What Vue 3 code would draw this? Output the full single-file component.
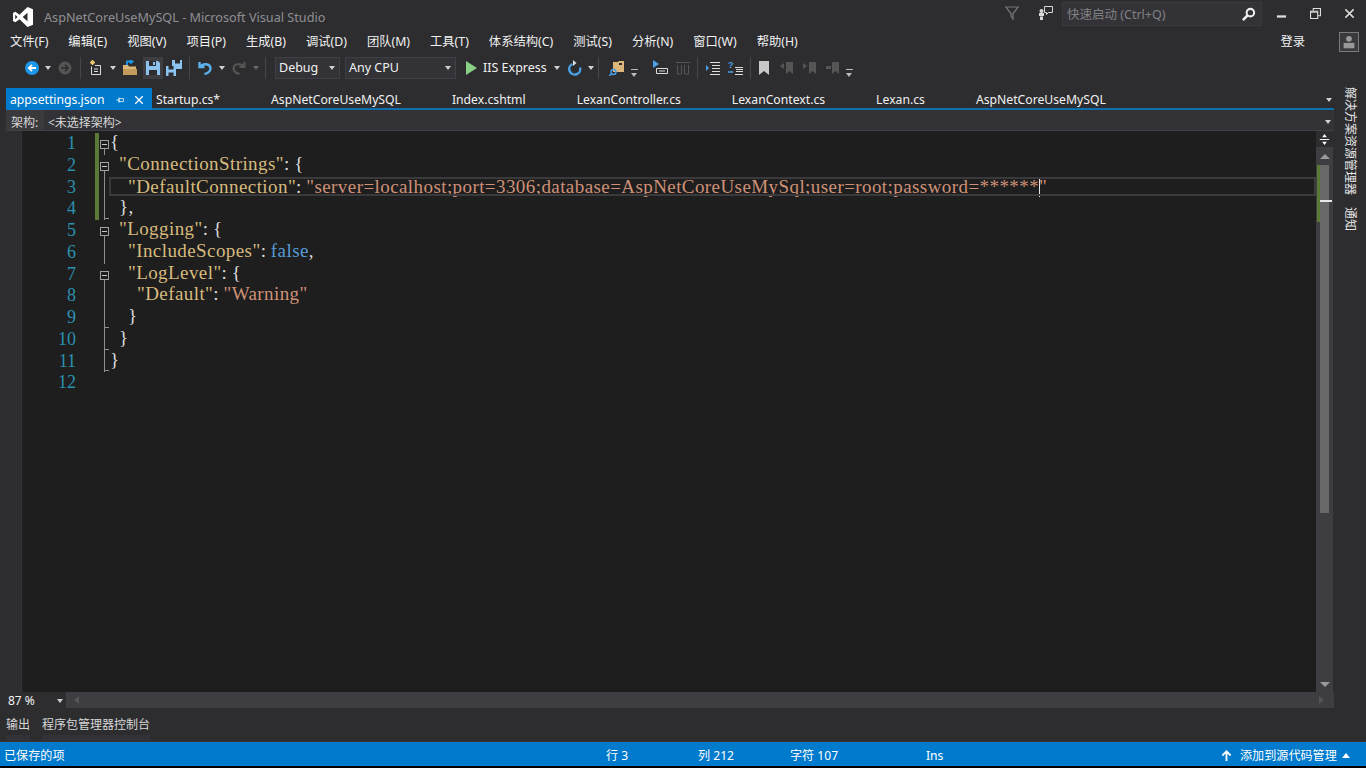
<script setup>
const menus = ['文件(F)', '编辑(E)', '视图(V)', '项目(P)', '生成(B)', '调试(D)', '团队(M)', '工具(T)', '体系结构(C)', '测试(S)', '分析(N)', '窗口(W)', '帮助(H)']
const tabs = ['Startup.cs*', 'AspNetCoreUseMySQL', 'Index.cshtml', 'LexanController.cs', 'LexanContext.cs', 'Lexan.cs', 'AspNetCoreUseMySQL']
const lines = [
  { fold: 'box', green: true, t: [['p', '{']] },
  { fold: 'box', green: true, t: [['p', '  '], ['k', '"ConnectionStrings"'], ['p', ': {']] },
  { fold: 'line', green: true, current: true, t: [['p', '    '], ['k', '"DefaultConnection"'], ['p', ': '], ['s', '"server=localhost;port=3306;database=AspNetCoreUseMySql;user=root;password=******'], ['c', ''], ['s', '"']] },
  { fold: 'end', green: true, t: [['p', '  },']] },
  { fold: 'box', t: [['p', '  '], ['k', '"Logging"'], ['p', ': {']] },
  { fold: 'line', t: [['p', '    '], ['k', '"IncludeScopes"'], ['p', ': '], ['b', 'false'], ['p', ',']] },
  { fold: 'box', t: [['p', '    '], ['k', '"LogLevel"'], ['p', ': {']] },
  { fold: 'line', t: [['p', '      '], ['k', '"Default"'], ['p', ': '], ['s', '"Warning"']] },
  { fold: 'end', t: [['p', '    }']] },
  { fold: 'end', t: [['p', '  }']] },
  { fold: 'end', t: [['p', '}']] },
  { fold: '', t: [] }
]
</script>

<template>
  <div class="ide">
    <header class="titlebar">
      <svg class="logo" viewBox="0 0 20 20"><path fill="#fff" fill-rule="evenodd" d="M14.5 0 20 2.3v15.4L14.5 20 6.5 12.2 2.4 15.3 0 14V6l2.4-1.300 4.100 3.100zM14.500 5.800 9.700 10l4.800 4.200zM2.200 7.700v4.600L4.600 10z"/></svg>
      <span class="apptitle">AspNetCoreUseMySQL - Microsoft Visual Studio</span>
      <svg class="t-filter" viewBox="0 0 14 14"><path fill="none" stroke="#77777b" stroke-width="1.200" d="M.7 1h12.600L8 7.500V13L6 10V7.500z"/></svg>
      <svg class="t-feedback" viewBox="0 0 16 16"><path fill="#d8d8d8" d="M2 8h5v3H2zM3 11.500h3V15H3z"/><circle cx="4.500" cy="6" r="2" fill="#d8d8d8"/><path fill="none" stroke="#d8d8d8" d="M7.500 1.500h8v6h-4l-2 2v-2h-2z"/></svg>
      <div class="quick">
        <span>快速启动 (Ctrl+Q)</span>
        <svg viewBox="0 0 16 16"><circle cx="10" cy="6" r="4" fill="none" stroke="#eee" stroke-width="2.200"/><path stroke="#eee" stroke-width="2.800" d="M7 9l-5 5"/></svg>
      </div>
      <div class="winbtn"><svg viewBox="0 0 12 12"><path fill="#ddd" d="M1 8h10v2.500H1z"/></svg></div>
      <div class="winbtn"><svg viewBox="0 0 12 12"><path fill="none" stroke="#ddd" stroke-width="1.200" d="M.6 3.600h7.800v7.800H.6zM3.600 3V.6h7.800v7.800H9"/><path stroke="#ddd" stroke-width="1.200" d="M.6 4.500h7.800"/></svg></div>
      <div class="winbtn"><svg viewBox="0 0 12 12"><path stroke="#ddd" stroke-width="1.600" d="M1.500 1.500l9 9M10.500 1.500l-9 9"/></svg></div>
    </header>

    <nav class="menubar">
      <span v-for="m in menus" :key="m">{{ m }}</span>
      <span class="login">登录</span>
      <div class="avatar"><svg viewBox="0 0 20 20"><circle cx="10" cy="6.500" r="3.200" fill="#999"/><path fill="#999" d="M4 11h12v6H4z"/></svg></div>
    </nav>

    <div class="toolbar">
      <svg class="ico i-back" viewBox="0 0 16 16"><circle cx="8" cy="8" r="7" fill="#1c97ea"/><path fill="none" stroke="#fff" stroke-width="1.800" d="M12 8H5M8 4.800 4.800 8 8 11.200"/></svg>
      <i class="caret c-back"></i>
      <svg class="ico i-fwd" viewBox="0 0 16 16"><circle cx="8" cy="8" r="6.500" fill="#555"/><path fill="none" stroke="#2d2d30" stroke-width="1.600" d="M4 8h7M8 4.800 11.200 8 8 11.200"/></svg>
      <i class="sep s1"></i>
      <svg class="ico i-new" viewBox="0 0 16 16"><path fill="none" stroke="#ddd" d="M3.500 6.500v8h9v-8M7 5.500h5.500v9"/><path fill="none" stroke="#e8c46c" stroke-width="1.200" d="M4.500 0v5M2 2.500h5M2.800 .8l3.400 3.400M6.200 .8 2.800 4.200"/><path stroke="#ddd" d="M6 9h4M6 11.500h4"/></svg>
      <i class="caret c-new"></i>
      <svg class="ico i-open" viewBox="0 0 16 16"><path fill="#dcb67a" d="M1 5h5l1 1.500h7V15H1z"/><path fill="#c29a5c" d="M1 9h14v6H1z"/><path fill="none" stroke="#1c97ea" stroke-width="1.800" d="M5 5V1.500h5M8 0l2.500 1.500L8 3.500"/></svg>
      <div class="savewrap">
        <svg class="ico" viewBox="0 0 16 16"><path fill="#8cc4ef" d="M1 1h12l2 2v12H1z"/><path fill="#2d2d30" d="M4 1h7v5H4zM4 10h8v5H4z"/><path fill="#8cc4ef" d="M8 2h2v3H8z"/></svg>
      </div>
      <svg class="ico i-saveall" viewBox="0 0 16 16"><path fill="#8cc4ef" d="M6 0h10v9H6z"/><path fill="#2d2d30" d="M9 0h5v3.500H9z"/><path fill="#8cc4ef" d="M0 6h10v10H0z"/><path fill="#2d2d30" d="M2.500 6h5v3.500h-5zM2.500 12.500h5V16h-5z"/></svg>
      <i class="sep s2"></i>
      <svg class="ico i-undo" viewBox="0 0 16 16"><path fill="none" stroke="#5cb0ec" stroke-width="2.400" d="M2.500 2v5h5M3 6.500C6 3 13 3.500 13.500 8c.3 3-2 5-6 6"/></svg>
      <i class="caret c-undo"></i>
      <svg class="ico i-redo" viewBox="0 0 16 16"><path fill="none" stroke="#555" stroke-width="2.200" d="M13.500 2v5h-5M13 6.500C10 3 3 3.500 2.500 8c-.3 3 2 5 6 6"/></svg>
      <i class="caret c-redo dim"></i>
      <i class="sep s3"></i>
      <div class="combo debug"><span>Debug</span><i class="caret"></i></div>
      <div class="combo cpu"><span>Any CPU</span><i class="caret"></i></div>
      <svg class="ico i-play" viewBox="0 0 16 16"><path fill="#89d185" d="M3 1l11 7-11 7z"/></svg>
      <span class="iis">IIS Express</span>
      <i class="caret c-iis"></i>
      <svg class="ico i-refresh" viewBox="0 0 16 16"><path fill="none" stroke="#4aa0e6" stroke-width="2.400" d="M5.500 4A5.500 5.500 0 1 0 13 7.500"/><path fill="#dcdcdc" d="M6 0v6l3.500-3z"/></svg>
      <i class="caret c-refresh"></i>
      <i class="sep s4"></i>
      <svg class="ico i-sync" viewBox="0 0 16 16"><path fill="#dcb67a" d="M4 2h5l1-1h5v11H4z"/><path fill="#2d2d30" d="M10 3h3v2h-3z"/><circle cx="4.500" cy="12" r="2.500" fill="none" stroke="#4aa0e6" stroke-width="1.400"/><path stroke="#4aa0e6" stroke-width="1.400" d="M2.500 14 0 16"/></svg>
      <i class="more m1"></i>
      <svg class="ico i-cmt" viewBox="0 0 16 16"><path fill="#4aa0e6" d="M0 0l6 4-6 4z"/><path fill="none" stroke="#dcdcdc" d="M3.500 8.500h11v5h-11z"/><path stroke="#dcdcdc" d="M6 11h6"/></svg>
      <svg class="ico i-pg" viewBox="0 0 16 16"><path fill="none" stroke="#555" d="M1 2.500h14M2.500 5v9h4V5M9.500 5v9h4V5"/></svg>
      <i class="sep s5"></i>
      <svg class="ico i-outd" viewBox="0 0 16 16"><path stroke="#dcdcdc" d="M5 2.500h10M7 5.500h8M7 8.500h8M7 11.500h8M5 14.500h10"/><path fill="#4aa0e6" d="M1 5l3 3-3 3z"/></svg>
      <svg class="ico i-ind" viewBox="0 0 16 16"><text x="0" y="8" class="qm">?</text><path stroke="#dcdcdc" d="M7 7.500h8M8 9.500h7M8 11.500h7M7 14.500h8"/><path stroke="#4aa0e6" stroke-width="1.500" d="M0 12h5"/></svg>
      <i class="sep s6"></i>
      <svg class="ico i-bm" viewBox="0 0 16 16"><path fill="#c8c8c8" d="M3 1h10v14l-5-4-5 4z"/></svg>
      <svg class="ico i-bm1" viewBox="0 0 16 16"><path fill="#555" d="M6 2h7v12l-3.500-3L6 14zM0 6l4-3v6z"/></svg>
      <svg class="ico i-bm2" viewBox="0 0 16 16"><path fill="#555" d="M6 2h7v12l-3.500-3L6 14zM0 3l4 3-4 3z"/></svg>
      <svg class="ico i-bm3" viewBox="0 0 16 16"><path fill="#555" d="M6 2h7v12l-3.500-3L6 14zM0 6h5v3H0z"/></svg>
      <i class="more m2"></i>
    </div>

    <div class="workspace">
      <div class="leftstrip"></div>
      <main class="doc">
        <div class="tabs">
          <div class="tab active">
            <span>appsettings.json</span>
            <svg class="pin" viewBox="0 0 12 12"><path fill="none" stroke="#fff" d="M4 3.500h6v4H4zM.5 5.500H4M4 2v7"/></svg>
            <svg class="close" viewBox="0 0 12 12"><path stroke="#fff" stroke-width="1.500" d="M1.500 1.500l9 9M10.500 1.500l-9 9"/></svg>
          </div>
          <div v-for="(t, i) in tabs" :key="i" class="tab">{{ t }}</div>
          <i class="caret tabmore"></i>
        </div>
        <div class="navbar">
          <span class="navlabel">架构:</span>
          <span class="navvalue">&lt;未选择架构&gt;</span>
          <i class="caret"></i>
        </div>

        <div class="editorwrap">
          <div class="gutterstrip"></div>
          <div class="editor">
            <div v-for="(l, i) in lines" :key="i" class="row">
              <span class="num">{{ i + 1 }}</span>
              <span class="green" :class="{ on: l.green }"></span>
              <span class="fold" :class="l.fold"><i v-if="l.fold === 'box'"></i></span>
              <span class="code" :class="{ current: l.current }"><template v-for="(s, j) in l.t" :key="j"><b v-if="s[0] === 'c'" class="cursor"></b><span v-else :class="s[0]">{{ s[1] }}</span></template></span>
            </div>
          </div>
          <div class="vscroll">
            <div class="splitbox"><svg class="split" viewBox="0 0 14 14"><path stroke="#fff" stroke-width="1.200" d="M1 7h12"/><path fill="#fff" d="M7 0l3 4H4zM7 14l3-4H4z"/></svg></div>
            <i class="arrow up"></i>
            <div class="track">
              <div class="thumb"><span class="scrollgreen"></span><span class="scrollmark"></span></div>
            </div>
            <i class="arrow down"></i>
          </div>
        </div>

        <div class="hbar">
          <div class="zoom"><span>87 %</span><i class="caret"></i></div>
          <div class="hscroll"><i class="hl"></i><i class="hr"></i></div>
        </div>
      </main>
      <aside class="sidetabs">
        <span>解决方案资源管理器</span>
        <span>通知</span>
      </aside>
    </div>

    <div class="tooltabs">
      <span class="tt">输出</span>
      <span class="tt">程序包管理器控制台</span>
    </div>

    <footer class="status">
      <span class="msg">已保存的项</span>
      <span class="ln">行 3</span>
      <span class="col">列 212</span>
      <span class="ch">字符 107</span>
      <span class="ins">Ins</span>
      <svg class="uparrow" viewBox="0 0 12 12"><path fill="none" stroke="#fff" stroke-width="2" d="M6 12V2M1.500 6 6 1.500 10.500 6"/></svg>
      <span class="scm">添加到源代码管理</span>
      <i class="upcaret"></i>
    </footer>
    <div class="blackbar"></div>
  </div>
</template>

<style scoped>
.ide {
  width: 1366px;
  height: 768px;
  overflow: hidden;
  display: flex;
  flex-direction: column;
  background: #2d2d30;
  color: #f1f1f1;
  font: 12px/16px "Noto Sans", "Noto Sans CJK SC", sans-serif;
}
i { display: block; font-style: normal; }
svg { display: block; flex: none; }

.titlebar { height: 30px; flex: none; display: flex; align-items: center; padding-left: 13px; }
.logo { width: 20px; height: 20px; margin-top: 3px; }
.apptitle { margin-left: 11px; color: #8f8f91; font-size: 12.67px; white-space: nowrap; margin-top: 3px; width: 282px; flex: none; }
.t-filter { width: 14px; height: 14px; margin-left: 679px; margin-top: -4px; }
.t-feedback { width: 16px; height: 16px; margin-left: 18px; margin-top: -4px; }
.quick {
  width: 200px; height: 24px; margin-left: 9px; margin-right: 2px; margin-top: -2px;
  background: #333337; border: 1px solid #3a3a3e; box-sizing: border-box;
  display: flex; align-items: center; justify-content: space-between; padding: 1px 3px 0 4px;
  color: #808083; font-size: 12.5px;
}
.quick svg { width: 15px; height: 15px; margin-right: 2px; }
.winbtn { width: 34px; height: 26px; display: flex; align-items: center; justify-content: center; margin-top: -4px; }
.winbtn svg { width: 11px; height: 11px; }

.menubar { height: 22px; flex: none; display: flex; align-items: center; gap: 20px; padding: 2px 0 0 10px; box-sizing: border-box; white-space: nowrap; color: #f1f1f1; font-size: 12.3px; }
.login { margin-left: auto; }
.avatar { width: 20px; height: 20px; box-sizing: border-box; border: 1px solid #7a7a7e; background: #3a3a3d; margin: 0 7px 0 14px; }
.avatar svg { width: 18px; height: 18px; }

.toolbar { height: 34px; flex: none; display: flex; align-items: center; padding-bottom: 3px; box-sizing: border-box; font-size: 12.5px; }
.ico { width: 16px; height: 16px; flex: none; }
.caret { width: 0; height: 0; border: 3.500px solid transparent; border-top: 4px solid #d0d0d0; border-bottom: 0; flex: none; }
.caret.dim { border-top-color: #666; }
.sep { width: 1px; height: 22px; background: #46464a; flex: none; }
.more { width: 7px; height: 7px; flex: none; border-top: 1px solid #bbb; position: relative; margin-top: 10px; }
.more::after { content: ""; position: absolute; left: 0; top: 3px; border: 3.500px solid transparent; border-top: 4px solid #bbb; border-bottom: 0; }
.i-back { margin-left: 24px; }
.c-back { margin-left: 5px; }
.i-fwd { margin-left: 6px; }
.s1 { margin-left: 7px; }
.i-new { margin-left: 7px; }
.c-new { margin-left: 6px; }
.i-open { margin-left: 6px; }
.savewrap { margin-left: 5px; width: 20px; height: 22px; background: #3e3e42; display: flex; align-items: center; justify-content: center; flex: none; }
.i-saveall { margin-left: 3px; }
.s2 { margin-left: 7px; }
.i-undo { margin-left: 7px; }
.c-undo { margin-left: 6px; }
.i-redo { margin-left: 6px; }
.c-redo { margin-left: 6px; }
.s3 { margin-left: 6px; }
.combo { height: 22px; box-sizing: border-box; background: #333337; border: 1px solid #3f3f46; display: flex; align-items: center; justify-content: space-between; padding: 0 4px 0 3px; color: #f1f1f1; flex: none; }
.debug { width: 65px; margin-left: 9px; }
.cpu { width: 111px; margin-left: 5px; }
.i-play { margin-left: 7px; }
.iis { margin-left: 4px; width: 65px; white-space: nowrap; }
.c-iis { margin-left: 6px; }
.i-refresh { margin-left: 7px; }
.c-refresh { margin-left: 5px; }
.s4 { margin-left: 4px; }
.i-sync { margin-left: 10px; }
.m1 { margin-left: 6px; }
.i-cmt { margin-left: 15px; }
.i-pg { margin-left: 6px; }
.s5 { margin-left: 6px; }
.i-outd { margin-left: 7px; }
.i-ind { margin-left: 7px; }
.qm { font: bold 9px "Liberation Sans", sans-serif; fill: #4aa0e6; }
.s6 { margin-left: 6px; }
.i-bm { margin-left: 5px; }
.i-bm1 { margin-left: 8px; }
.i-bm2 { margin-left: 7px; }
.i-bm3 { margin-left: 7px; }
.m2 { margin-left: 4px; }

.workspace { flex: 1; min-height: 0; display: flex; }
.leftstrip { width: 6px; flex: none; }
.doc { flex: 1; min-width: 0; display: flex; flex-direction: column; }
.tabs { height: 24px; flex: none; display: flex; align-items: flex-start; border-bottom: 2px solid #0f6fae; box-sizing: border-box; position: relative; white-space: nowrap; font-size: 12.2px; }
.tab { padding: 0 47px 0 4px; line-height: 28px; height: 22px; color: #f1f1f1; flex: none; }
.tab.active { background: #007acc; color: #fff; width: 146px; padding: 2px 0 0 4px; margin-top: 2px; box-sizing: border-box; height: 22px; display: flex; align-items: center; line-height: 16px; }
.pin { width: 9px; height: 9px; margin-left: 11px; }
.close { width: 10px; height: 10px; margin-left: 9px; }
.tabmore { position: absolute; right: 2px; top: 12px; }
.navbar { height: 20px; flex: none; display: flex; position: relative; background: #333337; color: #d8d8d8; }
.navlabel { width: 38px; padding-left: 5px; box-sizing: border-box; background: #3a3a3d; height: 20px; line-height: 25px; overflow: hidden; }
.navvalue { margin-left: 4px; line-height: 25px; height: 20px; }
.navbar .caret { position: absolute; right: 3px; top: 10px; }

.editorwrap { flex: 1; min-height: 0; display: flex; background: #1e1e1e; border-top: 1px solid #3f3f46; }
.gutterstrip { width: 16px; flex: none; background: #2d2d30; border-right: 1px solid #333337; box-sizing: border-box; }
.editor { flex: 1; min-width: 0; padding-top: 2px; font: 19px/21.75px "Liberation Serif", serif; letter-spacing: .42px; word-spacing: -.67px; }
.row { height: 21.75px; display: flex; white-space: pre; }
.num { width: 54px; text-align: right; color: #2b91af; flex: none; font-size: 18px; letter-spacing: 0; }
.green { width: 4px; margin-left: 19px; flex: none; }
.green.on { background: #5a7a34; }
.fold { width: 11px; flex: none; position: relative; }
.fold.line::before, .fold.box::before, .fold.end::before { content: ""; position: absolute; left: 5px; top: 0; bottom: 0; width: 1px; background: #8f8f8f; }
.fold.box::before { top: 50%; }
.fold.end::after { content: ""; position: absolute; left: 5px; bottom: 1px; width: 5px; height: 1px; background: #8f8f8f; }
.fold i { position: absolute; left: 1px; top: 7px; width: 7px; height: 7px; border: 1px solid #a0a0a0; background: #1e1e1e; }
.fold i::after { content: ""; position: absolute; left: 1px; right: 1px; top: 3px; height: 1px; background: #c8c8c8; }
.code { flex: 1; position: relative; color: #dcdcdc; line-height: 18.5px; }
.code.current::before { content: ""; position: absolute; left: -1px; right: 0; top: 0; bottom: 2px; border: 2px solid #3a3a3c; pointer-events: none; }
.k { color: #d7ba7d; }
.s { color: #ce9178; }
.b { color: #569cd6; }
.p { color: #dcdcdc; }
.cursor { display: inline-block; width: 0; height: 20px; border-left: 1px solid #e8e8e8; vertical-align: -4px; margin-right: -1px; }

.vscroll { width: 18px; flex: none; background: #3e3e42; position: relative; display: flex; flex-direction: column; align-items: center; border-right: 1px solid #2d2d30; box-sizing: border-box; }
.splitbox { width: 100%; height: 16px; background: #2d2d30; display: flex; align-items: center; justify-content: center; flex: none; }
.split { width: 11px; height: 11px; }
.arrow { width: 0; height: 0; border: 5px solid transparent; flex: none; }
.arrow.up { border-bottom: 5px solid #9a9a9a; border-top: 0; margin-top: 7px; }
.arrow.down { border-top: 5px solid #9a9a9a; border-bottom: 0; margin-bottom: 5px; }
.track { flex: 1; width: 100%; padding-top: 6px; }
.thumb { height: 348px; margin-left: 4px; width: 9px; background: #686868; position: relative; }
.scrollgreen { position: absolute; left: -3px; top: 0; width: 3px; height: 57px; background: #5a7a34; }
.scrollmark { position: absolute; left: 0; right: -3px; top: 35px; height: 2px; background: #e8e8e8; }

.hbar { height: 16px; flex: none; display: flex; background: #3e3e42; }
.zoom { width: 60px; flex: none; background: #2d2d30; display: flex; align-items: center; justify-content: space-between; padding: 2px 3px 0 2px; box-sizing: border-box; color: #f1f1f1; font-size: 12px; }
.hscroll { flex: 1; display: flex; justify-content: space-between; align-items: center; padding: 0 10px 0 8px; }
.hl { width: 0; height: 0; border: 4px solid transparent; border-right: 5px solid #55555a; border-left: 0; }
.hr { width: 0; height: 0; border: 4px solid transparent; border-left: 5px solid #55555a; border-right: 0; }

.sidetabs { width: 32px; flex: none; display: flex; flex-direction: column; align-items: center; gap: 12px; margin-top: 1px; }
.sidetabs span { writing-mode: vertical-rl; text-orientation: sideways; line-height: 16px; color: #e4e4e4; white-space: nowrap; }

.tooltabs { height: 34px; flex: none; display: flex; gap: 12px; padding: 9px 0 0 6px; box-sizing: border-box; border-bottom: 1px solid #3a2f2a; }
.tt { color: #d8d8d8; height: 24px; line-height: 16px; box-shadow: inset 0 -6px 0 #333337; }

.status { height: 24px; flex: none; background: #007acc; color: #fff; display: flex; align-items: center; white-space: nowrap; padding-top: 3px; box-sizing: border-box; font-size: 12.1px; }
.msg { margin-left: 4px; width: 602px; flex: none; }
.ln { width: 92px; flex: none; }
.col { width: 92px; flex: none; }
.ch { width: 136px; flex: none; }
.ins { width: 0; }
.uparrow { width: 11px; height: 11px; margin-left: 295px; }
.scm { margin-left: 8px; }
.upcaret { width: 0; height: 0; border: 4.500px solid transparent; border-bottom: 5px solid #fff; border-top: 0; margin-left: 5px; }
.blackbar { height: 2px; flex: none; background: #000; }
</style>

<style>
html, body { margin: 0; background: #2d2d30; }
</style>
